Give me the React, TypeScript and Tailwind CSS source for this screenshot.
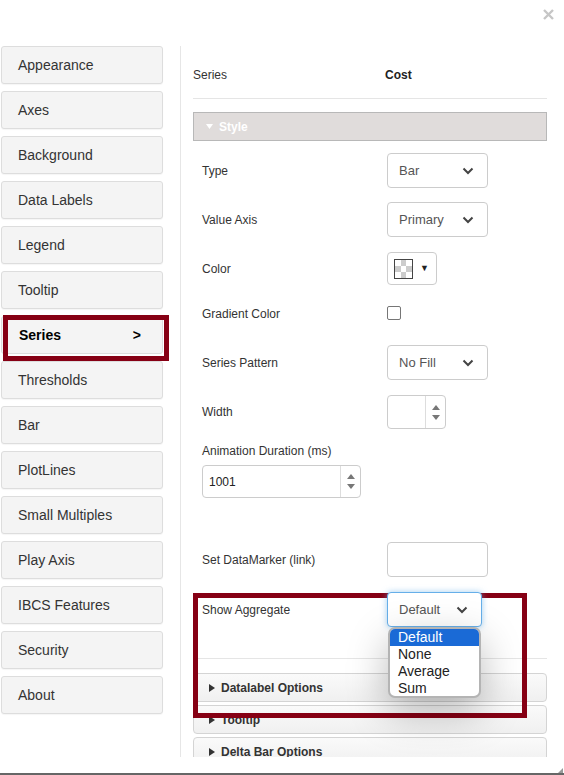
import React from "react";

const menu = [
  "Appearance",
  "Axes",
  "Background",
  "Data Labels",
  "Legend",
  "Tooltip",
  "Series",
  "Thresholds",
  "Bar",
  "PlotLines",
  "Small Multiples",
  "Play Axis",
  "IBCS Features",
  "Security",
  "About",
];

const Chevron = () => (
  <svg width="12" height="8" viewBox="0 0 12 8" className="shrink-0">
    <path d="M1.5 1.5l4.5 4.5 4.5-4.5" fill="none" stroke="#444" strokeWidth="2" />
  </svg>
);

const Select = ({ value, width = "w-[101px]", focus = false }: { value: string; width?: string; focus?: boolean }) => (
  <div
    className={`${width} h-[35px] rounded-[4px] border bg-white flex items-center justify-between pl-[11px] pr-[13px] text-[13px] text-[#555] ${
      focus ? "border-[#66afe9] shadow-[0_0_6px_rgba(102,175,233,0.6)]" : "border-[#ccc]"
    }`}
  >
    <span>{value}</span>
    <Chevron />
  </div>
);

const Spin = () => (
  <div className="w-[20px] h-full border-l border-[#ddd] flex flex-col items-center justify-center gap-[5px]">
    <svg width="8" height="5" viewBox="0 0 8 5">
      <path d="M0 5L4 0l4 5z" fill="#777" />
    </svg>
    <svg width="8" height="5" viewBox="0 0 8 5">
      <path d="M0 0h8L4 5z" fill="#777" />
    </svg>
  </div>
);

const Row = ({ label, children, className = "" }: { label: string; children: React.ReactNode; className?: string }) => (
  <div className={`flex items-center shrink-0 ${className}`}>
    <div className="w-[194px] pl-[9px] text-[12px] text-[#333]">{label}</div>
    {children}
  </div>
);

const Accordion = ({ title }: { title: string }) => (
  <div className="h-[29px] shrink-0 rounded-[4px] border border-[#d4d4d4] bg-gradient-to-b from-[#fafafa] to-[#f0f0f0] flex items-center pl-[15px] gap-[6px] text-[12px] font-bold text-[#333]">
    <svg width="6" height="8" viewBox="0 0 6 8">
      <path d="M0 0l6 4-6 4z" fill="#333" />
    </svg>
    <span>{title}</span>
  </div>
);

const App = () => {
  return (
    <div className="relative w-[564px] h-[775px] overflow-hidden bg-white font-['Liberation_Sans',Arial,sans-serif]">
      <div className="h-[46px] flex justify-end pr-[10px] pt-[9px]">
        <svg width="11" height="11" viewBox="0 0 11 11">
          <path d="M1 1l9 9M10 1l-9 9" stroke="#c6c6c6" strokeWidth="2.4" />
        </svg>
      </div>

      <div className="flex h-[711px] overflow-hidden">
        <div className="w-[181px] shrink-0 border-r border-[#e6e6e6] flex flex-col gap-[7px] pl-[1px]">
          {menu.map((m) =>
            m === "Series" ? (
              <div
                key={m}
                className="w-[162px] h-[38px] shrink-0 rounded-[3px] border border-[#ddd] bg-[#f4f4f4] flex items-center justify-between pl-[17px] pr-[21px] text-[14px] font-bold text-black"
              >
                <span>Series</span>
                <span>&gt;</span>
              </div>
            ) : (
              <div
                key={m}
                className="w-[162px] h-[38px] shrink-0 rounded-[3px] border border-[#ddd] bg-[#f4f4f4] shadow-[0_1px_1px_rgba(0,0,0,0.04)] flex items-center pl-[16px] text-[14px] text-[#333]"
              >
                {m}
              </div>
            )
          )}
        </div>

        <div className="flex-1 pl-[12px] pr-[17px] flex flex-col">
          <div className="h-[53px] shrink-0 pt-[6px] border-b border-[#e5e5e5] flex items-center text-[12px]">
            <div className="w-[192px] text-[#333]">Series</div>
            <div className="font-bold text-[#222]">Cost</div>
          </div>

          <div className="mt-[13px] h-[29px] shrink-0 border border-[#b8b8b8] bg-[#e0dcdb] flex items-center pl-[12px] gap-[6px] text-[12px] font-bold text-white">
            <svg width="7" height="5" viewBox="0 0 7 5">
              <path d="M0 0h7L3.5 5z" fill="#fff" />
            </svg>
            <span>Style</span>
          </div>

          <Row label="Type" className="mt-[12px]">
            <Select value="Bar" />
          </Row>
          <Row label="Value Axis" className="mt-[14px]">
            <Select value="Primary" />
          </Row>
          <Row label="Color" className="mt-[15px]">
            <div className="w-[50px] h-[33px] rounded-[4px] border border-[#ccc] flex items-center pl-[6px] gap-[7px]">
              <div className="w-[19px] h-[20px] border border-[#444] grid grid-cols-3 grid-rows-3">
                <div className="bg-white" />
                <div className="bg-[#ccc]" />
                <div className="bg-white" />
                <div className="bg-[#ccc]" />
                <div className="bg-white" />
                <div className="bg-[#ccc]" />
                <div className="bg-white" />
                <div className="bg-[#ccc]" />
                <div className="bg-white" />
              </div>
              <span className="text-[9px] text-[#222]">▼</span>
            </div>
          </Row>
          <Row label="Gradient Color" className="mt-[14px] h-[30px]">
            <div className="w-[14px] h-[14px] rounded-[2px] border border-[#767676] bg-white -mt-[3px]" />
          </Row>
          <Row label="Series Pattern" className="mt-[16px]">
            <Select value="No Fill" />
          </Row>
          <Row label="Width" className="mt-[15px]">
            <div className="w-[59px] h-[34px] rounded-[4px] border border-[#ccc] flex justify-end">
              <Spin />
            </div>
          </Row>

          <div className="mt-[15px] shrink-0 pl-[9px] text-[12px] leading-[14px] text-[#333]">Animation Duration (ms)</div>
          <div className="mt-[7px] shrink-0 ml-[9px] w-[159px] h-[33px] rounded-[4px] border border-[#ccc] flex items-center justify-between pl-[6px] text-[12px] text-[#222]">
            <span>1001</span>
            <Spin />
          </div>

          <Row label="Set DataMarker (link)" className="mt-[44px]">
            <div className="w-[101px] h-[35px] rounded-[4px] border border-[#ccc]" />
          </Row>
          <Row label="Show Aggregate" className="mt-[15px] relative z-10">
            <div className="relative">
              <Select value="Default" width="w-[95px]" focus />
              <div className="absolute left-[1px] top-[35px] w-[93px] h-[71px] rounded-[7px] border-2 border-[#b4b4b4] bg-white shadow-[0_14px_40px_rgba(0,0,0,0.28)] overflow-hidden text-[14px] leading-[17px] text-[#222]">
                <div className="bg-[#1a6ad6] text-white pl-[8px]">Default</div>
                <div className="pl-[8px]">None</div>
                <div className="pl-[8px]">Average</div>
                <div className="pl-[8px]">Sum</div>
              </div>
            </div>
          </Row>

          <div className="mt-[31px] shrink-0 border-t border-[#e5e5e5]" />

          <div className="mt-[14px] shrink-0 flex flex-col gap-[3px]">
            <Accordion title="Datalabel Options" />
            <Accordion title="Tooltip" />
            <Accordion title="Delta Bar Options" />
          </div>
        </div>
      </div>

      <div className="h-[16px] bg-white flex justify-end items-end pr-[1px]">
        <svg width="5" height="5" viewBox="0 0 5 5">
          <path d="M0 5L5 0v5z" fill="#999" />
        </svg>
      </div>
      <div className="h-[2px] bg-[#666]" />

      <div className="absolute left-[3px] top-[315px] w-[166px] h-[46px] border-[5px] border-[#860014]" />
      <div className="absolute left-[193px] top-[593px] w-[334px] h-[125px] border-[5px] border-[#860014]" />
    </div>
  );
};

export default App;
